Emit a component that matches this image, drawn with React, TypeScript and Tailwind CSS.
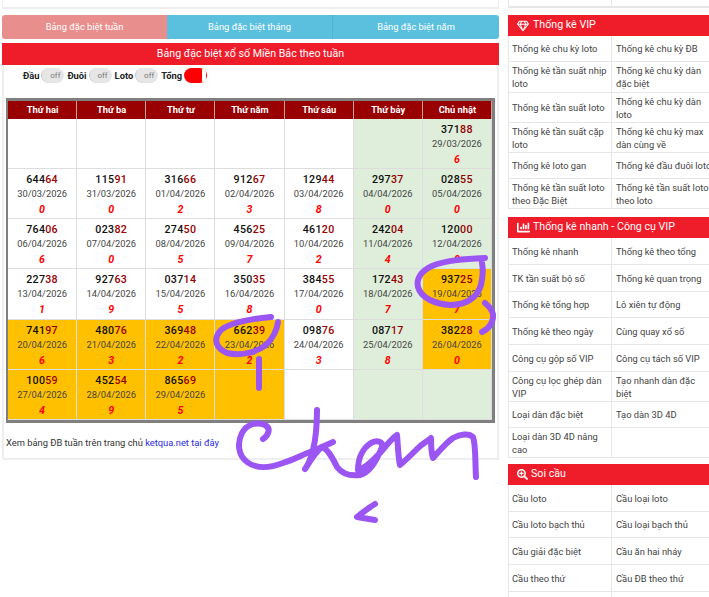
import { FaRegGem, FaChartBar, FaSearchPlus } from 'react-icons/fa'

const DAYS = ['Thứ hai', 'Thứ ba', 'Thứ tư', 'Thứ năm', 'Thứ sáu', 'Thứ bảy', 'Chủ nhật']

type Day = { num: string; date: string; sum: string } | null

const WEEKS: Day[][] = [
  [null, null, null, null, null, null, { num: '37188', date: '29/03/2026', sum: '6' }],
  [
    { num: '64464', date: '30/03/2026', sum: '0' },
    { num: '11591', date: '31/03/2026', sum: '0' },
    { num: '31666', date: '01/04/2026', sum: '2' },
    { num: '91267', date: '02/04/2026', sum: '3' },
    { num: '12944', date: '03/04/2026', sum: '8' },
    { num: '29737', date: '04/04/2026', sum: '0' },
    { num: '02855', date: '05/04/2026', sum: '0' },
  ],
  [
    { num: '76406', date: '06/04/2026', sum: '6' },
    { num: '02382', date: '07/04/2026', sum: '0' },
    { num: '27450', date: '08/04/2026', sum: '5' },
    { num: '45625', date: '09/04/2026', sum: '7' },
    { num: '46120', date: '10/04/2026', sum: '2' },
    { num: '24204', date: '11/04/2026', sum: '4' },
    { num: '12000', date: '12/04/2026', sum: '0' },
  ],
  [
    { num: '22738', date: '13/04/2026', sum: '1' },
    { num: '92763', date: '14/04/2026', sum: '9' },
    { num: '03714', date: '15/04/2026', sum: '5' },
    { num: '35035', date: '16/04/2026', sum: '8' },
    { num: '38455', date: '17/04/2026', sum: '0' },
    { num: '17243', date: '18/04/2026', sum: '7' },
    { num: '93725', date: '19/04/2026', sum: '7' },
  ],
  [
    { num: '74197', date: '20/04/2026', sum: '6' },
    { num: '48076', date: '21/04/2026', sum: '3' },
    { num: '36948', date: '22/04/2026', sum: '2' },
    { num: '66239', date: '23/04/2026', sum: '2' },
    { num: '09876', date: '24/04/2026', sum: '3' },
    { num: '08717', date: '25/04/2026', sum: '8' },
    { num: '38228', date: '26/04/2026', sum: '0' },
  ],
  [
    { num: '10059', date: '27/04/2026', sum: '4' },
    { num: '45254', date: '28/04/2026', sum: '9' },
    { num: '86569', date: '29/04/2026', sum: '5' },
    null,
    null,
    null,
    null,
  ],
]

const VIP = [
  'Thống kê chu kỳ loto', 'Thống kê chu kỳ ĐB',
  'Thống kê tần suất nhịp loto', 'Thống kê chu kỳ dàn đặc biệt',
  'Thống kê tần suất loto', 'Thống kê chu kỳ dàn loto',
  'Thống kê tần suất cặp loto', 'Thống kê chu kỳ max dàn cùng về',
  'Thống kê loto gan', 'Thống kê đầu đuôi loto',
  'Thống kê tần suất loto theo Đặc Biệt', 'Thống kê tần suất loto theo loto',
]

const NHANH = [
  'Thống kê nhanh', 'Thống kê theo tổng',
  'TK tần suất bộ số', 'Thống kê quan trọng',
  'Thống kê tổng hợp', 'Lô xiên tự động',
  'Thống kê theo ngày', 'Cùng quay xổ số',
  'Công cụ gộp số VIP', 'Công cụ tách số VIP',
  'Công cụ lọc ghép dàn VIP', 'Tạo nhanh dàn đặc biệt',
  'Loại dàn đặc biệt', 'Tạo dàn 3D 4D',
  'Loại dàn 3D 4D nâng cao', '',
]

const SOI = [
  'Cầu loto', 'Cầu loại loto',
  'Cầu loto bạch thủ', 'Cầu loại bạch thủ',
  'Cầu giải đặc biệt', 'Cầu ăn hai nháy',
  'Cầu theo thứ', 'Cầu ĐB theo thứ',
  '', '',
]

function cellBg(row: number, col: number) {
  if (row >= 4 && col < 4) return 'bg-[#ffc000]'
  if ((row === 3 || row === 4) && col === 6) return 'bg-[#ffc000]'
  if (col >= 5) return 'bg-[#dfeedb]'
  return 'bg-white'
}

function Toggle({ label, on }: { label: string; on?: boolean }) {
  return (
    <div className="flex items-center gap-[2px]">
      <span className="text-[9.33px] leading-[15px] font-bold text-[#222]">{label}</span>
      {on ? (
        <span className="flex h-[15px] w-[23px] items-center justify-end rounded-full bg-[#ff0000] pr-[1px]">
          <span className="h-[13px] w-[4px] rounded-r-full bg-white" />
        </span>
      ) : (
        <span className="flex h-[15px] w-[23px] items-center justify-end rounded-full border-l border-[#ccc] bg-[#e6e6e6] pr-[4px] text-[8px] leading-none text-[#777]">
          off
        </span>
      )}
    </div>
  )
}

function SideBox({
  icon,
  title,
  items,
  rows,
}: {
  icon: React.ReactNode
  title: string
  items: string[]
  rows: string
}) {
  return (
    <div>
      <div className="flex h-[21px] items-center gap-[3px] bg-[#ef1c2a] pl-[9px] text-[10.67px] leading-none text-white">
        {icon}
        <span>{title}</span>
      </div>
      <div className={`grid w-[210px] grid-cols-[103px_107px] border-l border-[#e6e6e6] ${rows}`}>
        {items.map((item, i) => (
          <div
            key={i}
            className={`flex items-center border-r border-b border-[#e6e6e6] text-[9.33px] leading-[13px] text-[#444] ${
              i % 2 ? 'pr-[6px] pl-[4px]' : 'pl-[3px]'
            }`}
          >
            {item}
          </div>
        ))}
      </div>
    </div>
  )
}

function Scribbles() {
  return (
    <svg
      className="pointer-events-none absolute top-0 left-0"
      width="709"
      height="597"
      fill="none"
      stroke="#9b55f2"
      strokeWidth="6"
      strokeLinecap="round"
      strokeLinejoin="round"
    >
      <path d="M271 317C250 319 228 323 220 331C213 340 216 348 227 353C240 356 256 353 266 345C273 338 277 330 278 322" />
      <path d="M259 359L259 388" />
      <path d="M485 258C465 259 447 260 432 266C421 271 416 279 418 287C421 298 435 304 450 305C466 305 477 298 481 285C483 276 483 268 482 263" />
      <path d="M485 303C491 308 494 313 493 318C492 325 488 329 482 332" />
      <path d="M263 439C269 435 271 428 265 425C256 421 246 425 242 433C237 443 238 455 247 462C256 469 270 468 283 463C295 459 302 455 310 452C318 449 326 445 333 442" />
      <path d="M317 410C317 425 316 438 313 450C311 458 308 465 305 469C309 463 315 452 322 447C328 449 333 459 337 467C343 475 352 476 360 475C369 473 377 460 382 447C383 441 377 440 371 443C363 448 358 458 358 470C366 468 376 458 385 447C390 441 394 437 397 435C398 445 398 456 400 465C405 461 411 455 417 449C423 443 428 441 431 438C431 445 431 452 433 458C440 450 447 442 453 438C460 434 469 433 473 437C476 445 475 462 476 477" />
      <path d="M375 504C368 508 362 513 357 517C363 518 369 519 375 520" />
    </svg>
  )
}

export default function App() {
  return (
    <div className="relative h-[597px] w-[709px] overflow-hidden bg-white font-['Roboto','Liberation_Sans',sans-serif]">
      <div className="flex items-start">
        <div className="ml-[2px] w-[497px] shrink-0">
          <div className="h-[9px] border-x border-b-2 border-[#eeeeee]" />

          <div className="mt-[6px] grid h-[24px] grid-cols-[165px_166px_166px] overflow-hidden rounded-[3px] text-center text-[9.33px] leading-[23px] text-white">
            <div className="bg-[#e88f8d]">Bảng đặc biệt tuần</div>
            <div className="border-r border-[#4fb3d6] bg-[#5bc0de]">Bảng đặc biệt tháng</div>
            <div className="bg-[#5bc0de]">Bảng đặc biệt năm</div>
          </div>

          <div className="mt-[4px] h-[417px] border-x-2 border-b-2 border-[#eeeeee]">
            <div className="-mx-[2px] h-[22px] bg-[#ef1c2a] text-center text-[10.67px] leading-[22px] text-white">
              Bảng đặc biệt xổ số Miền Bắc theo tuần
            </div>

            <div className="mt-[3px] flex gap-[3px] pl-[19px]">
              <Toggle label="Đầu" />
              <Toggle label="Đuôi" />
              <Toggle label="Loto" />
              <Toggle label="Tổng" on />
            </div>

            <div className="mt-[15px] ml-[2px] w-[489px] border-[3px] border-l-2 border-[#808080]">
              <div className="grid grid-cols-7 grid-rows-[18px_repeat(6,50.17px)]">
                {DAYS.map((d) => (
                  <div
                    key={d}
                    className="flex items-center justify-center border-r border-[#c9a0a0] bg-[#990000] pl-[1px] text-[9.33px] font-bold text-white"
                  >
                    {d}
                  </div>
                ))}
                {WEEKS.map((week, r) =>
                  week.map((day, c) => (
                    <div
                      key={`${r}-${c}`}
                      className={`flex flex-col items-center border-r border-b border-[#dddddd] pt-[4px] text-center ${cellBg(r, c)}`}
                    >
                      {day && (
                        <>
                          <div className="text-[10.67px] leading-[14px] font-medium tracking-[0.3px] text-[#111]">
                            {day.num.slice(0, 3)}
                            <span className="text-[#990000]">{day.num.slice(3)}</span>
                          </div>
                          <div className="text-[9.33px] leading-[14px] text-[#444]">{day.date}</div>
                          <div className="mt-[1px] text-[10.67px] leading-[15px] font-bold text-[#ff0000] italic">
                            {day.sum}
                          </div>
                        </>
                      )}
                    </div>
                  )),
                )}
              </div>
            </div>

            <p className="mt-[13px] pl-[2px] text-[9.33px] leading-[14px] text-[#333]">
              Xem bảng ĐB tuần trên trang chủ <span className="text-[#2a2ae0]">ketqua.net tại đây</span>
            </p>
          </div>
        </div>

        <div className="ml-[9px] w-[210px] shrink-0">
          <div className="grid h-[8px] grid-cols-[103px_107px] border-l border-b-2 border-[#e6e6e6]">
            <div className="border-r border-[#e6e6e6]" />
          </div>
          <div className="mt-[7px]">
            <SideBox
              icon={<FaRegGem className="mr-[1px] text-[12px]" />}
              title="Thống kê VIP"
              items={VIP}
              rows="grid-rows-[26px_31px_30px_30px_26px_30px]"
            />
          </div>
          <div className="mt-[8px]">
            <SideBox
              icon={<FaChartBar className="text-[13px]" />}
              title="Thống kê nhanh - Công cụ VIP"
              items={NHANH}
              rows="grid-rows-[27px_27px_26px_27px_27px_30px_26px_30px]"
            />
          </div>
          <div className="mt-[6px]">
            <SideBox
              icon={<FaSearchPlus className="text-[11px]" />}
              title="Soi cầu"
              items={SOI}
              rows="grid-rows-[27px_26px_27px_27px_27px]"
            />
          </div>
        </div>
      </div>
      <Scribbles />
    </div>
  )
}
